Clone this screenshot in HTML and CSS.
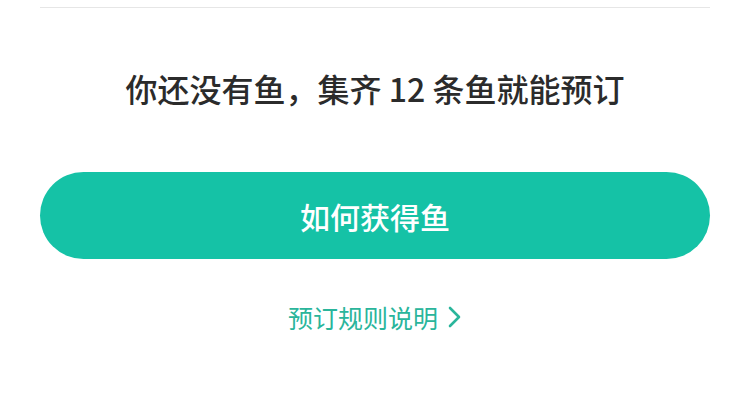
FILE: index.html
```html
<!DOCTYPE html>
<html lang="zh-CN">
<head>
  <meta charset="UTF-8">
  <meta name="viewport" content="width=device-width, initial-scale=1.0">
  <title>预订</title>
  <link rel="stylesheet" href="styles.css">
</head>
<body>
  <div class="booking">
    <div class="divider"></div>
    <h2 class="notice">你还没有鱼，集齐 12 条鱼就能预订</h2>
    <button class="primary-btn" type="button">如何获得鱼</button>
    <a class="rules-link" href="#">
      预订规则说明
      <svg class="chevron" width="14" height="22" viewBox="0 0 14 22" aria-hidden="true">
        <path d="M2 2 L11 11 L2 20" fill="none" stroke="currentColor" stroke-width="2.6" stroke-linecap="round" stroke-linejoin="round"/>
      </svg>
    </a>
  </div>
</body>
</html>
```

FILE: styles.css
```css
body {
  font-family: "Noto Sans CJK SC", "Noto Sans", sans-serif;
  background-color: #fff;
  margin: 0;
  padding: 0;
}
.booking {
  padding: 7px 40px 0;
  display: flex;
  flex-direction: column;
  align-items: center;
}
.divider {
  width: 100%;
  height: 1px;
  background-color: #e6e6e6;
}
.notice {
  margin: 58px 0 0;
  font-size: 32px;
  font-weight: 500;
  line-height: 44px;
  color: #2b2b2b;
}
.primary-btn {
  margin-top: 62px;
  width: 100%;
  height: 87px;
  border: none;
  border-radius: 44px;
  background-color: #15c2a6;
  color: #fff;
  font-family: inherit;
  font-size: 30px;
  font-weight: 500;
  cursor: pointer;
}
.rules-link {
  margin-top: 40px;
  display: flex;
  align-items: center;
  gap: 10px;
  font-size: 25px;
  line-height: 36px;
  color: #2ab59b;
  text-decoration: none;
}
.chevron {
  color: #2ab59b;
}
```
